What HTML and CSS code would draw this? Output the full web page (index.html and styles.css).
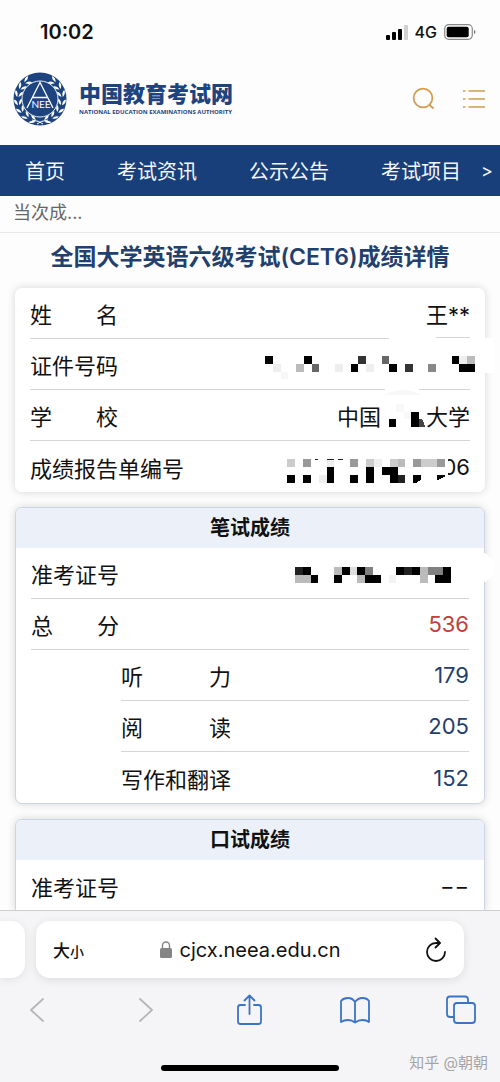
FILE: index.html
```html
<!DOCTYPE html>
<html lang="zh-CN">
<head>
  <meta charset="UTF-8" />
  <meta name="viewport" content="width=device-width, initial-scale=1">
  <title>中国教育考试网</title>
  <link rel="stylesheet" href="styles.css">
</head>
<body>

  <!-- Phone status bar -->
  <div class="status-bar">
    <time class="clock">10:02</time>
    <div class="status-icons">
      <svg width="23" height="15" viewBox="0 0 23 15">
        <rect x="1" y="10" width="4" height="5" rx="1"/>
        <rect x="7" y="7" width="4" height="8" rx="1"/>
        <rect x="13" y="4" width="4" height="11" rx="1"/>
        <rect x="19" y="0" width="4" height="15" rx="1" fill="#d0d0d0"/>
      </svg>
      <span>4G</span>
      <svg width="32" height="16" viewBox="0 0 32 16">
        <rect x="0.7" y="0.7" width="27.6" height="14.6" rx="4" fill="none" stroke="#888" stroke-width="1.2"/>
        <rect x="2.7" y="2.7" width="22" height="10.6" rx="2"/>
        <path d="M30 6v4q1.500-.6 1.500-2T30 6z" fill="#777"/>
      </svg>
    </div>
  </div>

  <!-- Site header -->
  <header class="site-header">
    <a class="logo" href="#">
      <svg width="54" height="54" viewBox="0 0 54 54">
        <defs>
          <g id="leaf" fill="#fff">
            <path d="M0-4Q2.400-1 0 3Q-2.400-1 0-4z" transform="translate(-2 0) rotate(-24)"/>
            <path d="M0-4Q2.400-1 0 3Q-2.400-1 0-4z" transform="translate(2 0) rotate(30)"/>
          </g>
          <g id="branch">
            <use href="#leaf" transform="rotate(-162 27 27) translate(27 5) rotate(90)"/>
            <use href="#leaf" transform="rotate(-141 27 27) translate(27 5) rotate(90)"/>
            <use href="#leaf" transform="rotate(-120 27 27) translate(27 5) rotate(90)"/>
            <use href="#leaf" transform="rotate(-99 27 27) translate(27 5) rotate(90)"/>
            <use href="#leaf" transform="rotate(-78 27 27) translate(27 5) rotate(90)"/>
            <use href="#leaf" transform="rotate(-57 27 27) translate(27 5) rotate(90)"/>
            <use href="#leaf" transform="rotate(-36 27 27) translate(27 5) rotate(90)"/>
          </g>
        </defs>
        <circle cx="27" cy="27" r="26.500" fill="#1d447f"/>
        <use href="#branch"/>
        <use href="#branch" transform="translate(54 0) scale(-1 1)"/>
        <circle cx="27" cy="27" r="18" fill="#1d447f" stroke="#e8eef6" stroke-width="1"/>
        <path d="M14 36L27 10.500L40 36M20 25.500H34" fill="none" stroke="#fff" stroke-width="1.300"/>
        <text x="28" y="36" text-anchor="middle" class="seal-text">NEE</text>
        <path d="M19 48q8 1 11 4M35 48q-8 1-11 4" fill="none" stroke="#fff"/>
      </svg>
      <span class="logo-words">
        <span class="logo-cn">中国教育考试网</span>
        <span class="logo-en">NATIONAL EDUCATION EXAMINATIONS AUTHORITY</span>
      </span>
    </a>
    <div class="header-tools">
      <button type="button" aria-label="搜索">
        <svg width="24" height="24" viewBox="0 0 24 24" fill="none" stroke="#d39b4e" stroke-width="1.700">
          <circle cx="11" cy="11" r="9.400"/>
          <path d="M17 17.500l4.500 4"/>
        </svg>
      </button>
      <button type="button" aria-label="菜单">
        <svg width="24" height="24" viewBox="0 0 24 24" fill="none" stroke="#d39b4e" stroke-width="1.500">
          <path d="M1 4h2.500M6.500 4H23M1 12h2.500M6.500 12H23M1 20h2.500M6.500 20H23"/>
        </svg>
      </button>
    </div>
  </header>

  <nav class="site-nav">
    <a href="#">首页</a>
    <a href="#">考试资讯</a>
    <a href="#">公示公告</a>
    <a href="#">考试项目</a>
    <a class="nav-more" href="#">&gt;</a>
  </nav>

  <!-- Score report -->
  <main class="content">
    <div class="crumb">当次成...</div>
    <h1>全国大学英语六级考试(CET6)成绩详情</h1>

    <dl class="card info">
      <div class="row">
        <dt><span>姓</span><span>名</span></dt>
        <dd>王**</dd>
      </div>
      <div class="row">
        <dt>证件号码</dt>
        <dd>
          <svg class="mosaic mosaic-id" viewBox="0 0 27 2">
            <path class="brush" d="M16-2.300Q19-4 22-2.300H29.500V2.200H16z"/>
            <path fill="#d5d5d5" d="M22-2.500H26.300V-2.370H22z"/>
            <path d="M0 0h1v1h-1zM5 0h1v1h-1zM11 1h1v1h-1zM16 1h1v1h-1zM24 0h1v1h-1zM25 1h2v1h-2z"/>
            <path fill="#333" d="M12 0h1v1h-1zM18 1h1v1h-1z"/>
            <path fill="#666" d="M6 1h1v1h-1zM15 0h1v1h-1z"/>
            <path fill="#888" d="M21 1h1v1h-1z"/>
            <path fill="#bbb" d="M4 1h1v1h-1zM26 0h1v1h-1z"/>
            <path fill="#eee" d="M1 1h1v1h-1zM9 1h1v1h-1zM13 1h1v1h-1zM25 0h1v1h-1z"/>
            <path fill="#f7f7f7" d="M2 2h1v1h-1z"/>
          </svg>
        </dd>
      </div>
      <div class="row">
        <dt><span>学</span><span>校</span></dt>
        <dd>中国
          <svg class="mosaic mosaic-school" viewBox="-1 0 6 3">
            <path class="brush" d="M-.5-2.200H4L5 0V4.700H-.2z"/>
            <path fill="#f8f8f8" d="M1 0h1v1h-1zM2 1h1v1h-1zM-.7-1.200Q2-2.500 4.500-1.200z"/>
            <path d="M0 2h1v1h-1zM3 1h1v2h-1z"/>
            <path fill="#444" d="M4 2h.5l.4 1H4z"/>
          </svg>大学
        </dd>
      </div>
      <div class="row">
        <dt>成绩报告单编号</dt>
        <dd>
          <svg class="mosaic mosaic-report" viewBox="0 0 20 3">
            <path class="brush" d="M0-.1H20.300Q20.800 1.500 20 3L12 3.500Q6 4.500 0 3.500z"/>
            <path fill="#ccc" d="M0 0h1v1h-1zM10 0h1v1h-1zM13 0h1v1h-1zM17 0h2v1h-2z"/>
            <path fill="#999" d="M2 0h1v1h-1zM8 0h1v1h-1zM16 0h1v1h-1zM19 0h1v1h-1z"/>
            <path fill="#bbb" d="M14 0h1v1h-1z"/>
            <path fill="#eee" d="M5 0h1v1h-1zM4 2h1v1h-1zM11 0h1v1h-1z"/>
            <path d="M5 1h1v2h-1zM10 1h1v2h-1zM12 1h2v1h-2zM13 2h1v1h-1zM0 2h1v1h-1zM2 2h1v1h-1zM8 2h1v1h-1zM16 2h1v.6l-.6.4H16zM19 2h1v.2l-.7.400H19z"/>
            <path fill="#222" d="M14 2h1v1h-1zM3.500 0h.4v.15h-.4zM5 0h.9v.15H5zM6.400 0h.7v.15h-.7z"/>
          </svg>06
        </dd>
      </div>
    </dl>

    <section class="card exam">
      <h2>笔试成绩</h2>
      <dl>
        <div class="row">
          <dt>准考证号</dt>
          <dd>
            <svg class="mosaic mosaic-ticket" viewBox="0 0 20 2">
              <path class="brush" d="M21-1.800L23-2.200Q26-1.500 25.500.5Q25 2.500 22 2.200H21z"/>
              <path d="M1 0h1v1h-1zM2 1h1v1h-1zM5 1h1v1h-1zM6 0h1v1h-1zM8 0h1v1h-1zM9 1h2v1h-2zM13 0h1v1h-1zM15 0h1v1h-1zM19 0h1v2h-1zM18 1h1v1h-1z"/>
              <path fill="#222" d="M0 0h1v1h-1zM14 0h1v1h-1z"/>
              <path fill="#808080" d="M9 0h1v1h-1zM17 0h2v1h-2z"/>
              <path fill="#bbb" d="M0 1h2v1h-2zM5 0h1v1h-1zM8 1h1v1h-1zM16 0h1v2h-1z"/>
              <path fill="#ddd" d="M7 0h1v1h-1z"/>
              <path fill="#f2f2f2" d="M12 1h1v1h-1z"/>
            </svg>
          </dd>
        </div>
        <div class="row">
          <dt><span>总</span><span>分</span></dt>
          <dd class="total">536</dd>
        </div>
        <div class="row sub">
          <dt><span>听</span><span>力</span></dt>
          <dd>179</dd>
        </div>
        <div class="row sub">
          <dt><span>阅</span><span>读</span></dt>
          <dd>205</dd>
        </div>
        <div class="row sub">
          <dt>写作和翻译</dt>
          <dd>152</dd>
        </div>
      </dl>
    </section>

    <section class="card exam">
      <h2>口试成绩</h2>
      <dl>
        <div class="row">
          <dt>准考证号</dt>
          <dd>−−</dd>
        </div>
      </dl>
    </section>
  </main>

  <!-- Browser controls -->
  <footer class="browser">
    <div class="tabs">
      <div class="prev-tab"></div>
      <div class="address">
        <button type="button" class="text-size" aria-label="文字大小">大<small>小</small></button>
        <label class="url">
          <svg width="12" height="17" viewBox="0 0 12 17">
            <rect y="7" width="12" height="10" rx="1.500" fill="#858585"/>
            <path d="M2.500 8V4.500a3.500 3.500 0 0 1 7 0V8" fill="none" stroke="#858585" stroke-width="1.400"/>
          </svg>
          <input type="text" value="cjcx.neea.edu.cn" aria-label="网址">
        </label>
        <button type="button" aria-label="刷新">
          <svg width="22" height="26" viewBox="0 0 22 26" fill="none" stroke="#111" stroke-width="1.800" stroke-linecap="round" stroke-linejoin="round">
            <path d="M14.500 6H11a9 9 0 1 0 9 9"/>
            <path d="M10.500 1.500L15 6l-4.500 4.500"/>
          </svg>
        </button>
      </div>
    </div>

    <div class="toolbar">
      <button type="button" aria-label="后退">
        <svg width="30" height="32" viewBox="0 0 30 32"><path d="M21 5L9 16l12 11"/></svg>
      </button>
      <button type="button" aria-label="前进">
        <svg width="30" height="32" viewBox="0 0 30 32"><path d="M12 5l12 11-12 11"/></svg>
      </button>
      <button type="button" aria-label="分享">
        <svg width="30" height="32" viewBox="0 0 30 32">
          <path d="M11 11H6.500q-2.500 0-2.500 2.500v14q0 2.500 2.500 2.500h18q2.500 0 2.500-2.500v-14q0-2.500-2.500-2.500H20M15.500 20V1.500M10.500 6.500l5-5 5 5"/>
        </svg>
      </button>
      <button type="button" aria-label="书签">
        <svg width="30" height="32" viewBox="0 0 30 32">
          <path d="M15 8Q12.500 4 8 4T1 7v21q3-2 7-2t7 2.500Q18.500 26 22.500 26t6.500 2V7q-2-3-6.500-3T15 8v20.500"/>
        </svg>
      </button>
      <button type="button" aria-label="标签页">
        <svg width="30" height="32" viewBox="0 0 30 32">
          <rect x="8" y="9" width="21" height="20" rx="3"/>
          <path d="M8 23H4q-3 0-3-3V5.500q0-3 3-3h15q3 0 3 3V9"/>
        </svg>
      </button>
    </div>

    <div class="home-row">
      <div class="home-bar"></div>
      <span class="watermark">知乎 @朝朝</span>
    </div>
  </footer>

</body>
</html>
```
FILE: styles.css
```css
* { box-sizing: border-box; }

body {
  margin: 0;
  height: 100vh;
  display: flex;
  flex-direction: column;
  overflow: hidden;
  background: #fdfdfd;
  color: #111;
  font-family: Inter, "Noto Sans CJK SC", sans-serif;
}

h1, h2, dl, dd { margin: 0; }

a { text-decoration: none; }

button {
  display: flex;
  align-items: center;
  padding: 0;
  border: none;
  background: none;
  color: inherit;
  font-family: inherit;
  cursor: pointer;
}

svg { display: block; }

/* Status bar */
.status-bar {
  display: flex;
  justify-content: space-between;
  align-items: center;
  height: 52px;
  padding: 12px 24px 0 40px;
}

.clock {
  font-size: 20px;
  font-weight: 600;
}

.status-icons {
  display: flex;
  align-items: center;
  gap: 7px;
  font-size: 16px;
  font-weight: 500;
}

/* Site header */
.site-header {
  display: flex;
  justify-content: space-between;
  align-items: center;
  height: 93px;
  padding: 0 14px 0 13px;
}

.logo {
  display: flex;
  align-items: center;
  gap: 12px;
  color: #1d447f;
}

.seal-text {
  font: 10px Lato, sans-serif;
  fill: #fff;
}

.logo-words {
  display: flex;
  flex-direction: column;
}

.logo-cn {
  font-size: 22px;
  line-height: 26px;
  font-weight: 900;
}

.logo-en {
  font-family: "Open Sans", sans-serif;
  font-size: 6px;
  line-height: 10px;
  font-weight: 700;
  white-space: nowrap;
}

.header-tools {
  display: flex;
  gap: 26px;
}

/* Navigation */
.site-nav {
  display: flex;
  align-items: center;
  gap: 52px;
  height: 51px;
  padding: 0 7px 0 25px;
  background: #183f7a;
  font-size: 20px;
  white-space: nowrap;
}

.site-nav a { color: #f2f7fd; }

.site-nav .nav-more {
  margin-left: auto;
  font-size: 18px;
}

.site-nav a:nth-last-child(2) { margin-right: -52px; }

/* Report */
.content {
  flex: 1;
  min-height: 0;
  overflow: hidden;
}

.crumb {
  height: 37px;
  padding-left: 13px;
  border-bottom: 1px solid #e9e9e9;
  color: #666;
  font-size: 18px;
  line-height: 34px;
}

h1 {
  padding: 8px 0 15px;
  color: #223f6e;
  font-size: 23px;
  line-height: 32px;
  font-weight: 600;
  text-align: center;
}

.card {
  margin: 0 15px 15px;
  border-radius: 7px;
  background: #fff;
  box-shadow: 0 0 8px rgba(0, 0, 0, 0.16);
}

.exam {
  border: 1px solid #ccd6e2;
}

.exam:last-child {
  border-radius: 7px 7px 0 0;
}

.exam h2 {
  border-radius: 6px 6px 0 0;
  background: #ecf1f9;
  font-size: 20px;
  line-height: 40px;
  font-weight: 700;
  text-align: center;
}

.row {
  display: flex;
  justify-content: space-between;
  align-items: center;
  height: 51px;
  margin: 0 15px;
  border-bottom: 1px solid #d5d5d5;
  font-size: 22px;
}

.row:last-child { border-bottom: none; }

.row dt {
  display: flex;
  justify-content: space-between;
  min-width: 88px;
}

.row dd {
  display: flex;
  align-items: center;
}

.sub { margin-left: 105px; }

.sub dt { min-width: 110px; }

.sub dd { color: #223f6e; }

.row .total { color: #c0403a; }

/* Pixelated private values */
.mosaic {
  position: relative;
  overflow: visible;
  shape-rendering: crispEdges;
}

.brush { fill: #fff; }

.mosaic-id {
  width: 210px;
  margin-right: -5px;
}

.mosaic-school { width: 45px; }

.mosaic-report {
  width: 158px;
  margin-top: 8px;
  margin-right: -3px;
}

.mosaic-ticket {
  width: 156px;
  margin-top: 4px;
  margin-right: 18px;
}

/* Browser controls */
.browser {
  position: relative;
  padding-top: 10px;
  border-top: 1px solid #cfcfd1;
  background: #f5f5f7;
}

.tabs {
  display: flex;
  gap: 11px;
  padding-right: 36px;
}

.prev-tab {
  width: 25px;
  border-radius: 0 14px 14px 0;
  background: #fff;
  box-shadow: 0 2px 10px rgba(0, 0, 0, 0.08);
}

.address {
  display: flex;
  flex: 1;
  justify-content: space-between;
  align-items: center;
  height: 57px;
  padding: 0 17px;
  border-radius: 14px;
  background: #fff;
  box-shadow: 0 2px 10px rgba(0, 0, 0, 0.1);
}

.text-size {
  align-items: baseline;
  font-size: 17px;
  font-weight: 500;
}

.text-size small { font-size: 14px; }

.url {
  display: flex;
  align-items: center;
  gap: 8px;
}

.url input {
  width: 170px;
  padding: 0;
  border: none;
  background: none;
  color: #111;
  font-family: inherit;
  font-size: 20px;
}

.toolbar {
  display: flex;
  justify-content: space-between;
  padding: 16px 24px 0 22px;
}

.toolbar svg {
  fill: none;
  stroke: #3b74c4;
  stroke-width: 1.8;
  stroke-linecap: round;
  stroke-linejoin: round;
}

.toolbar button:nth-child(-n+2) svg { stroke: #b5b6b9; }

.home-row {
  display: flex;
  justify-content: center;
  align-items: flex-end;
  height: 56px;
  padding-bottom: 11px;
}

.home-bar {
  width: 178px;
  height: 6px;
  border-radius: 3px;
  background: #000;
}

.watermark {
  position: absolute;
  right: 12px;
  bottom: 10px;
  color: #a3a3a6;
  font-size: 15px;
  text-shadow: 0 0 1px #fff;
}
```
